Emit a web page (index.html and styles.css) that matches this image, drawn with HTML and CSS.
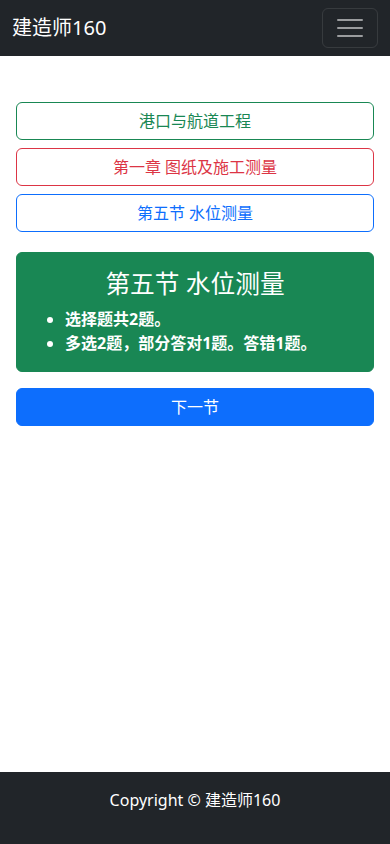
FILE: index.html
```html
<!DOCTYPE html>
<html lang="zh-CN">
<head>
<meta charset="utf-8">
<meta name="viewport" content="width=device-width, initial-scale=1">
<title>建造师160</title>
<link rel="stylesheet" href="styles.css">
</head>
<body>
<nav class="navbar">
  <a class="brand" href="#">建造师160</a>
  <button class="toggler" type="button" aria-label="菜单">
    <svg width="30" height="30" viewBox="0 0 30 30" aria-hidden="true">
      <path d="M3 7h24M3 15h24M3 23h24" stroke="rgba(255,255,255,0.55)" stroke-width="2" stroke-linecap="round"/>
    </svg>
  </button>
</nav>
<main class="content">
  <div class="crumbs">
    <a class="btn btn-outline-success" href="#">港口与航道工程</a>
    <a class="btn btn-outline-danger" href="#">第一章 图纸及施工测量</a>
    <a class="btn btn-outline-primary" href="#">第五节 水位测量</a>
  </div>
  <div class="panel">
    <h2 class="panel-title">第五节 水位测量</h2>
    <ul class="panel-list">
      <li>选择题共2题。</li>
      <li>多选2题，部分答对1题。答错1题。</li>
    </ul>
  </div>
  <a class="btn btn-primary" href="#">下一节</a>
</main>
<footer class="footer">Copyright © 建造师160</footer>
</body>
</html>
```
FILE: styles.css
```css
* { box-sizing: border-box; }
html, body { margin: 0; padding: 0; }
body {
  min-height: 100vh;
  display: flex;
  flex-direction: column;
  font-family: "Noto Sans", "Noto Sans CJK SC", sans-serif;
  font-size: 16px;
  line-height: 1.5;
  color: #212529;
  background: #fff;
}
.navbar {
  height: 56px;
  background: #212529;
  display: flex;
  align-items: center;
  justify-content: space-between;
  padding: 0 12px;
}
.brand {
  color: #fff;
  font-size: 20px;
  line-height: 30px;
  text-decoration: none;
}
.toggler {
  width: 56px;
  height: 40px;
  padding: 0;
  background: transparent;
  border: 1px solid rgba(255,255,255,0.1);
  border-radius: 6px;
  display: flex;
  align-items: center;
  justify-content: center;
}
.toggler svg { display: block; }
.content {
  flex: 1;
  padding: 46px 16px 0;
  display: flex;
  flex-direction: column;
}
.crumbs {
  display: flex;
  flex-direction: column;
  gap: 8px;
  margin-bottom: 20px;
}
.btn {
  display: block;
  height: 38px;
  line-height: 24px;
  padding: 6px 12px;
  border: 1px solid transparent;
  border-radius: 6px;
  text-align: center;
  text-decoration: none;
  font-size: 16px;
}
.btn-outline-success { color: #198754; border-color: #198754; }
.btn-outline-danger { color: #dc3545; border-color: #dc3545; }
.btn-outline-primary { color: #0d6efd; border-color: #0d6efd; }
.btn-primary { color: #fff; background: #0d6efd; border-color: #0d6efd; }
.panel {
  background: #198754;
  border: 1px solid #198754;
  border-radius: 6px;
  padding: 16px;
  color: #fff;
  margin-bottom: 16px;
}
.panel-title {
  margin: 0 0 8px;
  font-size: 24.7px;
  font-weight: 400;
  line-height: 1.2;
  text-align: center;
}
.panel-list {
  margin: 0;
  padding-left: 32px;
  font-weight: 700;
}
.footer {
  background: #212529;
  color: #fff;
  text-align: center;
  height: 72px;
  padding: 16px 0 32px;
  line-height: 24px;
}
```
